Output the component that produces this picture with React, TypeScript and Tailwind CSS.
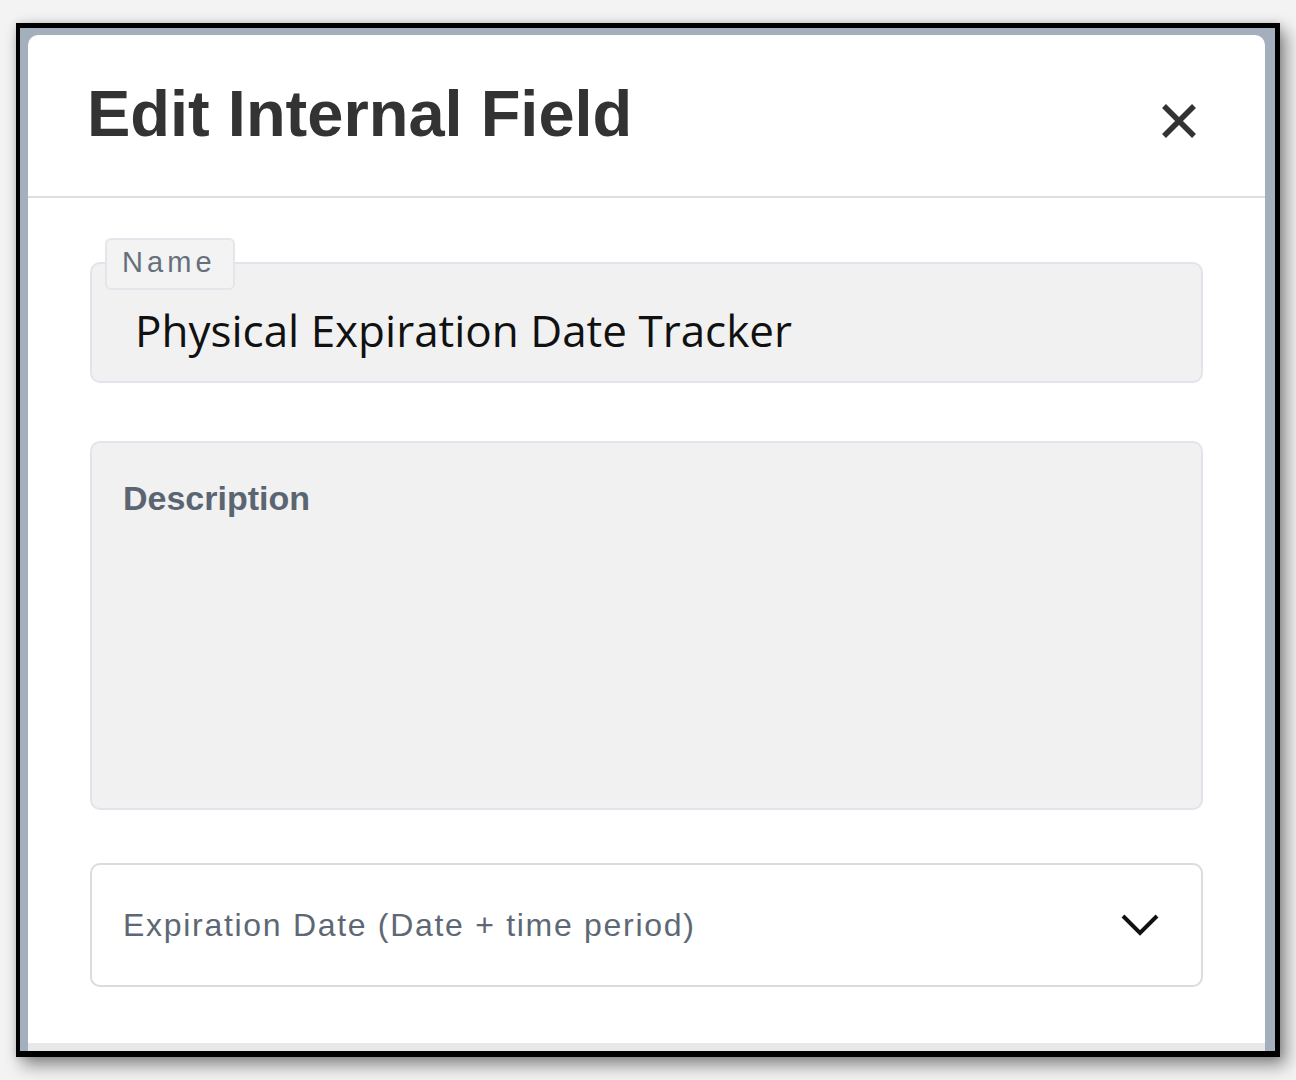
export default function App() {
  return (
    <div className="min-h-screen w-full bg-[#f3f3f3] pt-[23px] pl-[16px] overflow-hidden">
      {/* window frame */}
      <div className="w-[1264px] h-[1034px] border-black border-l-4 border-t-[5px] border-r-[5px] border-b-[6px] bg-[#a4afbe] pl-[8px] pt-[7px] pr-[10px] shadow-[6px_8px_16px_rgba(0,0,0,0.45),0_0_8px_rgba(0,0,0,0.12)]">
        <div className="h-full bg-white rounded-t-[10px] border-b-[8px] border-[#e8e8e8] flex flex-col font-['Liberation_Sans',Arial,sans-serif]">
          {/* header */}
          <div className="h-[163px] shrink-0 border-b-2 border-[#dedede] flex justify-between items-start pt-[46px] pl-[59px] pr-[68px]">
            <h1 className="text-[65px] leading-none font-bold text-[#333333]">Edit Internal Field</h1>
            <button className="mt-[22px] w-[36px] h-[36px] flex items-center justify-center text-[#333333]">
              <svg width="36" height="36" viewBox="0 0 36 36" fill="none">
                <path d="M3 3 L33 33 M33 3 L3 33" stroke="currentColor" strokeWidth="5.5" />
              </svg>
            </button>
          </div>

          {/* body */}
          <div className="px-[62px] flex flex-col">
            {/* name */}
            <div className="relative mt-[40px]">
              <div className="absolute left-[15px] top-0 w-[130px] h-[52px] bg-[#f3f3f3] border-2 border-[#e3e6ea] rounded-[6px] pt-[8px] pl-[15px]">
                <span className="text-[29px] leading-[28px] tracking-[0.14em] text-[#66707c]">Name</span>
              </div>
              <div className="mt-[24px] h-[121px] bg-[#f1f1f1] border-2 border-[#e1e5eb] rounded-[10px] pt-[44px] pl-[43px]">
                <div className="font-['Open_Sans',sans-serif] text-[44px] leading-[44px] text-[#111111]">
                  Physical Expiration Date Tracker
                </div>
              </div>
            </div>

            {/* description */}
            <div className="mt-[58px] h-[369px] bg-[#f1f1f1] border-2 border-[#e1e5eb] rounded-[10px] pt-[38px] pl-[31px]">
              <div className="text-[34px] leading-[34px] font-bold text-[#5a6571]">Description</div>
            </div>

            {/* type select */}
            <div className="mt-[53px] h-[124px] bg-white border-2 border-[#dcdcdc] rounded-[10px] flex items-center justify-between pl-[31px] pr-[41px]">
              <span className="text-[32px] leading-none tracking-[1.7px] text-[#5d6874]">
                Expiration Date (Date + time period)
              </span>
              <svg width="40" height="26" viewBox="0 0 40 26" fill="none">
                <path d="M3 4 L20 21 L37 4" stroke="#111111" strokeWidth="4" />
              </svg>
            </div>
          </div>
        </div>
      </div>
    </div>
  )
}
